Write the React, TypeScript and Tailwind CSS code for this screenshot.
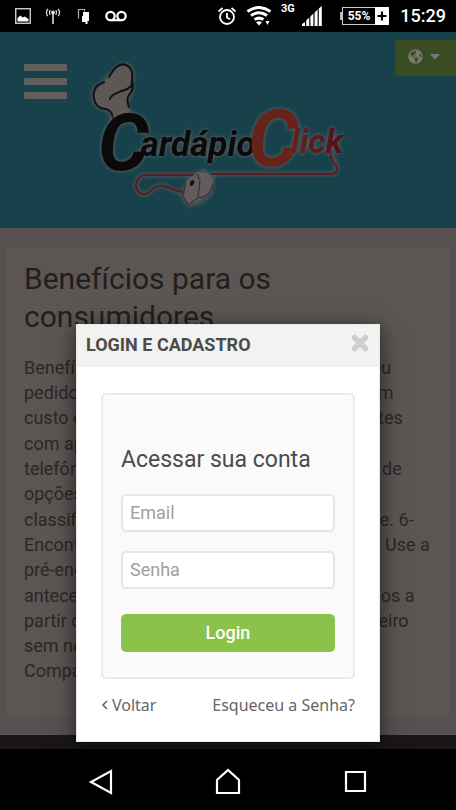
import { FaCaretDown, FaGlobeAmericas } from "react-icons/fa";

const benefitBlocks = [
  [
    "Benefícios para os consumidores: 1- Faça seu",
    "pedido online pelo celular ou pelo tablets, sem",
    "custo extra. 2 - Encontrar todos os restaurantes",
  ],
  [
    "com apenas um clique, sem",
    "telefônar. 3 - Obtenha uma grande variedade de",
    "opções de pratos. 4-Veja a",
  ],
  [
    "classificação de cada restaurante em seu site. 6-",
    "Encontrar as promoções mais exclusivas. 7 - Use a",
    "pré-encomenda e faça com",
  ],
  [
    "antecedência. 8-Receba todos os seus pedidos a",
    "partir de sua casa e pague somente em dinheiro",
    "sem necessidade de sair.",
    "Comparar os preços.",
  ],
];

function StatusBar() {
  return (
    <header className="flex h-8 items-center justify-between bg-black pl-[15px] pr-[10px] text-white">
      <div className="flex items-center gap-[14px]">
        <svg className="h-4 w-4" viewBox="0 0 16 16" aria-label="Imagem">
          <rect x="0.75" y="0.75" width="14.5" height="14.5" fill="none" stroke="#ddd" strokeWidth="1.3" />
          <path d="M2.5 13.5V10l3-2.5 2 2 2-1 2.5 1.5 1.5 1v2.500z" fill="#fff" />
        </svg>
        <svg className="h-4 w-4" viewBox="0 0 16 16" fill="none" stroke="#ddd" strokeWidth="1.2" aria-label="Rádio">
          <path d="M8 5v11" strokeWidth="1.6" />
          <circle cx="8" cy="4.500" r="1.300" fill="#fff" />
          <path d="M5.300 2.200q-1.600 2.300 0 4.600M10.700 2.200q1.600 2.300 0 4.600M2.800 0.800q-2.600 3.700 0 7.400M13.200 0.800q2.600 3.700 0 7.400" />
        </svg>
        <svg className="h-4 w-4" viewBox="0 0 16 16" aria-label="Dispositivos">
          <path d="M3.500 10.500V1.500h6v2" fill="none" stroke="#aaa" strokeWidth="1.200" />
          <path d="M8 4h6v9h-1.500v3h-2v-2H7V8h1z" fill="#fff" />
        </svg>
        <svg className="h-4 w-[22px]" viewBox="0 0 22 16" fill="none" stroke="#fff" strokeWidth="2.200" aria-label="Correio de voz">
          <circle cx="5.500" cy="8" r="4.200" />
          <circle cx="16.500" cy="8" r="4.200" />
          <path d="M5.500 12.200h11" />
        </svg>
      </div>
      <div className="flex items-center">
        <svg className="mr-[9px] h-5 w-5" viewBox="0 0 20 20" fill="none" stroke="#fff" strokeWidth="1.800" aria-label="Alarme">
          <circle cx="10" cy="11" r="7" />
          <path d="M10 7v4.500l3 1.800M1.500 5.500l4-3.500M18.500 5.500l-4-3.500" />
        </svg>
        <svg className="mr-[9px] h-5 w-[26px]" viewBox="0 0 26 20" fill="none" stroke="#fff" strokeWidth="3" aria-label="Wi-Fi">
          <path d="M1.500 5.500q11.500-8 23 0M5 9.600q8-5.600 16 0M8.500 13.600q4.500-3 9 0" />
          <path d="M10 16.200q3-2 6 0l-3 3.300zM19.500 15h4l-2 4z" fill="#fff" stroke="none" />
        </svg>
        <span className="mb-[14px] mr-[7px] font-[Roboto] text-[11px] font-bold leading-4">3G</span>
        <svg className="mr-[18px] h-5 w-5" viewBox="0 0 20 20" fill="#fff" aria-label="Sinal">
          <path d="M0 20v-2l3-2v4zM4.200 20v-5.500l3-3V20zM8.400 20v-9.500l3-3V20zM12.600 20V6.500l3-3V20zM16.800 20V2.500L19.800 0v20z" />
        </svg>
        <span className="h-2 w-[2px] bg-[#bbb]" />
        <span className="flex h-[18px] items-center border border-r-0 border-[#ccc] px-[5px] font-[Roboto] text-[12px] font-bold leading-4">
          55%
        </span>
        <svg className="mr-[11px] h-[18px] w-[14px]" viewBox="0 0 14 18" aria-label="Carregando">
          <path d="M0 0h14v18H0z" fill="#fff" />
          <path d="M7 4.500v9M2.500 9h9" stroke="#000" strokeWidth="2.200" />
        </svg>
        <time className="font-[Roboto] text-[18px] font-medium leading-5">15:29</time>
      </div>
    </header>
  );
}

function Logo() {
  return (
    <svg
      className="ml-[17px] mt-[18px] h-[165px] w-[264px] shrink-0"
      viewBox="84 50 264 165"
      role="img"
      aria-label="Cardápio Click"
    >
      <defs>
        <linearGradient id="flame" x1="0" y1="0" x2="1" y2="0">
          <stop offset="0" stopColor="#6b341c" />
          <stop offset="0.500" stopColor="#642019" />
          <stop offset="1" stopColor="#540f1b" />
        </linearGradient>
        <filter id="halo" x="-10%" y="-10%" width="120%" height="120%">
          <feGaussianBlur stdDeviation="1.500" />
        </filter>
      </defs>
      <g filter="url(#halo)" stroke="#55595a" strokeWidth="5" fill="none" opacity="0.700">
        <path d="M112 124C112 114 112 111 105 109C91 109 90 88 101 84C108 80 117 62 125 65C134 66 133 77 132 87C131 96 128 97 126 104L130 112" />
        <path d="M198 175H149C137 174 132 186 140 193C150 198 151 184 164 186L181 193M211 174H332Q339 172 336 165L331 152" />
        <path d="M190 178L204 171L213 178L211 193L199 203L188 205L182 194Z" />
      </g>
      <path
        d="M112 124C112 114 112 111 105 109C91 109 90 88 101 84C108 80 117 62 125 65C134 66 133 77 132 87C131 96 128 97 126 104L130 112L115 124Z"
        fill="#5d5755"
      />
      <path
        d="M114 125C113 115 112 110 105 109C92 109 90 88 100 84L104 82M109 77C115 66 121 63 126 65C134 68 133 78 131 87M110 99C112 93 117 94 121 91C124 90 126 91 130 87M132 80Q135 88 129 95Q126 99 129 107"
        fill="none"
        stroke="#151112"
        strokeWidth="2"
        strokeLinecap="round"
      />
      <path
        d="M198 175H149C137 174 132 186 140 193C150 198 151 184 164 186L184 193M211 174H332Q340 172 336 165Q330 160 331 152"
        fill="none"
        stroke="#5a1c22"
        strokeWidth="2"
      />
      <path d="M186 182L197 172L208 173L213 180L211 192L200 200L189 205L183 196Z" fill="#625d5c" />
      <path
        d="M186 182L183 196L188 205L198 198L200 180L197 174M199 198Q211 196 213 184"
        fill="none"
        stroke="#3d3435"
        strokeWidth="1.300"
      />
      <ellipse cx="192" cy="183" rx="2" ry="3" fill="#151112" transform="rotate(25 192 183)" />
      <g
        className="drop-shadow-[0_0_2px_#6b6b6b]"
        fontFamily="Roboto, sans-serif"
        fontWeight="700"
        fontStyle="italic"
      >
        <text x="98" y="170" fill="#0c090b">
          <tspan fontSize="80">C</tspan>
          <tspan fontSize="35" dx="-8" dy="-14">
            ardápio
          </tspan>
        </text>
        <text x="248" y="166" fill="#65231a">
          <tspan fontSize="80">C</tspan>
          <tspan fontSize="34" dx="-8" dy="-13" fill="url(#flame)">
            lick
          </tspan>
        </text>
      </g>
    </svg>
  );
}

function LoginDialog() {
  return (
    <section
      role="dialog"
      aria-labelledby="dialog-title"
      className="w-2/3 border border-[#e8e8e8] bg-white text-[#4b4b4b] shadow-[0_5px_20px_rgba(0,0,0,0.600)]"
    >
      <header className="flex h-[42px] items-center justify-between bg-[#f2f2f0] pb-[2px] pl-[9px] pr-[10px]">
        <h2 id="dialog-title" className="text-[18px] font-bold leading-6">
          LOGIN E CADASTRO
        </h2>
        <button type="button" aria-label="Fechar" className="pb-1">
          <svg className="h-[18px] w-[18px]" viewBox="0 0 18 18">
            <path d="M3.500 3.500l11 11M14.500 3.500l-11 11" stroke="#cfcfcf" strokeWidth="5.500" strokeLinecap="round" />
          </svg>
        </button>
      </header>
      <div className="px-6 pb-6 pt-[26px]">
        <form
          className="flex flex-col rounded-[5px] border-2 border-[#ebebeb] bg-[#fafafa] px-[18px] pb-[25px] pt-[50px]"
          onSubmit={(event) => event.preventDefault()}
        >
          <h3 className="mb-5 text-[23px] leading-[29px]">Acessar sua conta</h3>
          <input
            type="email"
            aria-label="Email"
            placeholder="Email"
            className="mb-[19px] h-[38px] w-full rounded-[5px] border-2 border-[#e6e6e6] bg-white px-[7px] pb-[2px] text-[18px] placeholder:text-[#a0a0a0]"
          />
          <input
            type="password"
            aria-label="Senha"
            placeholder="Senha"
            className="mb-[25px] h-[38px] w-full rounded-[5px] border-2 border-[#e6e6e6] bg-white px-[7px] pb-[2px] text-[18px] placeholder:text-[#a0a0a0]"
          />
          <button type="submit" className="h-[38px] w-full rounded-[5px] bg-[#8bc34a] pb-[2px] text-[18px] font-medium text-white">
            Login
          </button>
        </form>
        <div className="mt-[14px] flex justify-between font-['Noto_Sans',sans-serif] text-[16px] leading-6 text-[#666]">
          <a href="#voltar" className="flex items-center gap-1">
            <svg className="h-3 w-[7px]" viewBox="0 0 7 12" aria-hidden="true">
              <path d="M6 2L2 6l4 4" fill="none" stroke="#666" strokeWidth="1.600" />
            </svg>
            Voltar
          </a>
          <a href="#senha">Esqueceu a Senha?</a>
        </div>
      </div>
    </section>
  );
}

export default function App() {
  return (
    <div className="flex min-h-screen flex-col bg-black font-[Roboto,sans-serif]">
      <StatusBar />
      <div className="relative flex grow flex-col bg-[#565051]">
        <div className="flex h-[196px] items-start overflow-hidden bg-[#17414b]">
          <button type="button" aria-label="Menu" className="ml-6 mt-8 flex w-[43px] shrink-0 flex-col gap-[7px]">
            <span className="h-[7px] w-full rounded-[1px] bg-[#625e5e]" />
            <span className="h-[7px] w-full rounded-[1px] bg-[#625e5e]" />
            <span className="h-[7px] w-full rounded-[1px] bg-[#625e5e]" />
          </button>
          <Logo />
          <button
            type="button"
            aria-label="Idioma"
            className="ml-auto mt-2 flex h-9 w-[61px] shrink-0 items-center justify-center gap-1 rounded-l-[3px] bg-[#3a4c22] pb-1 text-[#77786f]"
          >
            <FaGlobeAmericas size={15} />
            <FaCaretDown size={16} />
          </button>
        </div>
        <main className="mx-[5px] mb-[19px] mt-[19px] grow rounded-[3px] bg-[#5b5553] px-[19px] pt-[13px] text-[#2c2726]">
          <h1 className="mb-[19px] text-[30px] leading-[38px] text-[#231e1d]">
            Benefícios para os
            <br />
            consumidores
          </h1>
          <div className="flex flex-col gap-px whitespace-nowrap text-[18px] leading-[25px]">
            {benefitBlocks.map((lines) => (
              <p key={lines[0]}>
                {lines.map((line) => (
                  <span key={line} className="block">
                    {line}
                  </span>
                ))}
              </p>
            ))}
          </div>
        </main>
        <footer className="h-[14px] bg-[#1a1617]" />
        <div className="absolute inset-x-0 top-[292px] flex justify-center">
          <LoginDialog />
        </div>
      </div>
      <nav className="flex h-[61px] items-center justify-center gap-[95px] bg-black pt-1" aria-label="Sistema">
        <button type="button" aria-label="Voltar">
          <svg className="h-8 w-8" viewBox="0 0 32 32" fill="none" stroke="#fff" strokeWidth="2.200">
            <path d="M26 5v22L6 16z" />
          </svg>
        </button>
        <button type="button" aria-label="Início">
          <svg className="h-8 w-8" viewBox="0 0 32 32" fill="none" stroke="#fff" strokeWidth="2.200">
            <path d="M5 27V14L16 4l11 10v13z" />
          </svg>
        </button>
        <button type="button" aria-label="Recentes">
          <svg className="h-8 w-8" viewBox="0 0 32 32" fill="none" stroke="#fff" strokeWidth="2.200">
            <path d="M7 6h19v19H7z" />
          </svg>
        </button>
      </nav>
    </div>
  );
}
